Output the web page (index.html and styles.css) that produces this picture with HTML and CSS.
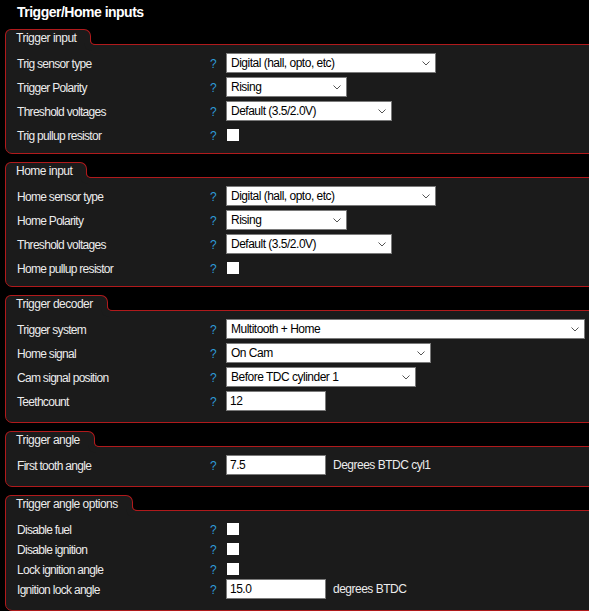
FILE: index.html
```html
<!DOCTYPE html>
<html lang="en">
<head>
  <meta charset="UTF-8" />
  <title>Trigger/Home inputs</title>
  <link rel="stylesheet" href="styles.css">
</head>
<body>
  <h1 class="page-title">Trigger/Home inputs</h1>

  <div class="group">
    <div class="group-tab">Trigger input</div>
    <div class="group-body">
      <div class="field">
        <label>Trig sensor type</label>
        <span class="help">?</span>
        <div class="select w-210"><span>Digital (hall, opto, etc)</span><svg width="8" height="5" viewBox="0 0 8 5"><path d="M0.5 0.5L4 4L7.5 0.5" /></svg></div>
      </div>
      <div class="field">
        <label>Trigger Polarity</label>
        <span class="help">?</span>
        <div class="select w-120"><span>Rising</span><svg width="8" height="5" viewBox="0 0 8 5"><path d="M0.5 0.5L4 4L7.5 0.5" /></svg></div>
      </div>
      <div class="field">
        <label>Threshold voltages</label>
        <span class="help">?</span>
        <div class="select w-166"><span>Default (3.5/2.0V)</span><svg width="8" height="5" viewBox="0 0 8 5"><path d="M0.5 0.5L4 4L7.5 0.5" /></svg></div>
      </div>
      <div class="field">
        <label>Trig pullup resistor</label>
        <span class="help">?</span>
        <span class="check"></span>
      </div>
    </div>
  </div>

  <div class="group">
    <div class="group-tab">Home input</div>
    <div class="group-body">
      <div class="field">
        <label>Home sensor type</label>
        <span class="help">?</span>
        <div class="select w-210"><span>Digital (hall, opto, etc)</span><svg width="8" height="5" viewBox="0 0 8 5"><path d="M0.5 0.5L4 4L7.5 0.5" /></svg></div>
      </div>
      <div class="field">
        <label>Home Polarity</label>
        <span class="help">?</span>
        <div class="select w-120"><span>Rising</span><svg width="8" height="5" viewBox="0 0 8 5"><path d="M0.5 0.5L4 4L7.5 0.5" /></svg></div>
      </div>
      <div class="field">
        <label>Threshold voltages</label>
        <span class="help">?</span>
        <div class="select w-166"><span>Default (3.5/2.0V)</span><svg width="8" height="5" viewBox="0 0 8 5"><path d="M0.5 0.5L4 4L7.5 0.5" /></svg></div>
      </div>
      <div class="field">
        <label>Home pullup resistor</label>
        <span class="help">?</span>
        <span class="check"></span>
      </div>
    </div>
  </div>

  <div class="group">
    <div class="group-tab">Trigger decoder</div>
    <div class="group-body">
      <div class="field">
        <label>Trigger system</label>
        <span class="help">?</span>
        <div class="select w-359"><span>Multitooth + Home</span><svg width="8" height="5" viewBox="0 0 8 5"><path d="M0.5 0.5L4 4L7.5 0.5" /></svg></div>
      </div>
      <div class="field">
        <label>Home signal</label>
        <span class="help">?</span>
        <div class="select w-205"><span>On Cam</span><svg width="8" height="5" viewBox="0 0 8 5"><path d="M0.5 0.5L4 4L7.5 0.5" /></svg></div>
      </div>
      <div class="field">
        <label>Cam signal position</label>
        <span class="help">?</span>
        <div class="select w-190"><span>Before TDC cylinder 1</span><svg width="8" height="5" viewBox="0 0 8 5"><path d="M0.5 0.5L4 4L7.5 0.5" /></svg></div>
      </div>
      <div class="field input-row">
        <label>Teethcount</label>
        <span class="help">?</span>
        <input class="text-input" type="text" value="12">
      </div>
    </div>
  </div>

  <div class="group">
    <div class="group-tab">Trigger angle</div>
    <div class="group-body">
      <div class="field input-row">
        <label>First tooth angle</label>
        <span class="help">?</span>
        <div class="control">
          <input class="text-input" type="text" value="7.5">
          <span class="unit">Degrees BTDC cyl1</span>
        </div>
      </div>
    </div>
  </div>

  <div class="group">
    <div class="group-tab">Trigger angle options</div>
    <div class="group-body tight">
      <div class="field">
        <label>Disable fuel</label>
        <span class="help">?</span>
        <span class="check"></span>
      </div>
      <div class="field">
        <label>Disable ignition</label>
        <span class="help">?</span>
        <span class="check"></span>
      </div>
      <div class="field">
        <label>Lock ignition angle</label>
        <span class="help">?</span>
        <span class="check"></span>
      </div>
      <div class="field input-row">
        <label>Ignition lock angle</label>
        <span class="help">?</span>
        <div class="control">
          <input class="text-input" type="text" value="15.0">
          <span class="unit">degrees BTDC</span>
        </div>
      </div>
    </div>
  </div>
</body>
</html>
```

FILE: styles.css
```css
* { box-sizing: border-box; }

body {
  margin: 0;
  background: #000;
  color: #ececec;
  font-family: 'Liberation Sans', Arial, sans-serif;
  font-size: 12px;
  letter-spacing: -0.7px;
  overflow-x: hidden;
}

.page-title {
  margin: 0;
  height: 29px;
  padding: 4px 0 0 17px;
  font-size: 14px;
  line-height: 16px;
  font-weight: bold;
  letter-spacing: -0.5px;
  color: #fff;
}

.group {
  margin: 0 -20px 8px 5px;
}

.group-tab {
  position: relative;
  z-index: 1;
  width: fit-content;
  height: 16px;
  margin-bottom: -1px;
  padding: 1px 14px 0 10px;
  line-height: 14px;
  letter-spacing: -0.5px;
  background: #1b1b1b;
  border: 1px solid #b01a1c;
  border-bottom: none;
  border-radius: 6px 7px 0 0;
}

/* concave curve where the tab meets the frame line */
.group-tab::after {
  content: '';
  position: absolute;
  left: 100%;
  bottom: 0;
  width: 5px;
  height: 5px;
  border-left: 1px solid #b01a1c;
  border-bottom: 1px solid #b01a1c;
  border-bottom-left-radius: 5px;
  box-shadow: -3px 3px 0 3px #1b1b1b;
}

.group-body {
  display: flex;
  flex-direction: column;
  gap: 4px;
  padding: 8px 0 8px 11px;
  background: #1b1b1b;
  border: 1px solid #b01a1c;
  border-radius: 0 0 0 7px;
}

.group-body.tight { gap: 0; }

.field {
  display: grid;
  grid-template-columns: 192px 17px auto;
  align-items: center;
  height: 20px;
}

.field.input-row {
  height: 23px;
  padding-bottom: 3px;
}

.field label,
.help {
  padding-top: 2px;
}

.help {
  color: #2e9ad6;
  padding-left: 1px;
}

.select {
  display: flex;
  align-items: center;
  justify-content: space-between;
  height: 20px;
  padding: 0 5px 0 4px;
  background: #fff;
  color: #000;
  letter-spacing: -0.5px;
  border: 1px solid #7a7a7a;
}

.select svg path {
  fill: none;
  stroke: #555;
  stroke-width: 1;
}

.w-120 { width: 121px; }
.w-166 { width: 166px; }
.w-190 { width: 190px; }
.w-205 { width: 205px; }
.w-210 { width: 210px; }
.w-359 { width: 359px; }

.check {
  display: block;
  width: 12px;
  height: 12px;
  margin-left: 1px;
  background: #fff;
}

.control {
  display: flex;
  align-items: center;
  gap: 7px;
}

.text-input {
  width: 100px;
  height: 20px;
  margin: 0;
  padding: 0 3px;
  font-family: inherit;
  font-size: 12px;
  letter-spacing: -0.5px;
  color: #000;
  background: #fff;
  border: 1px solid #7a7a7a;
  outline: none;
}

.unit {
  color: #ececec;
  letter-spacing: -0.5px;
}
```
